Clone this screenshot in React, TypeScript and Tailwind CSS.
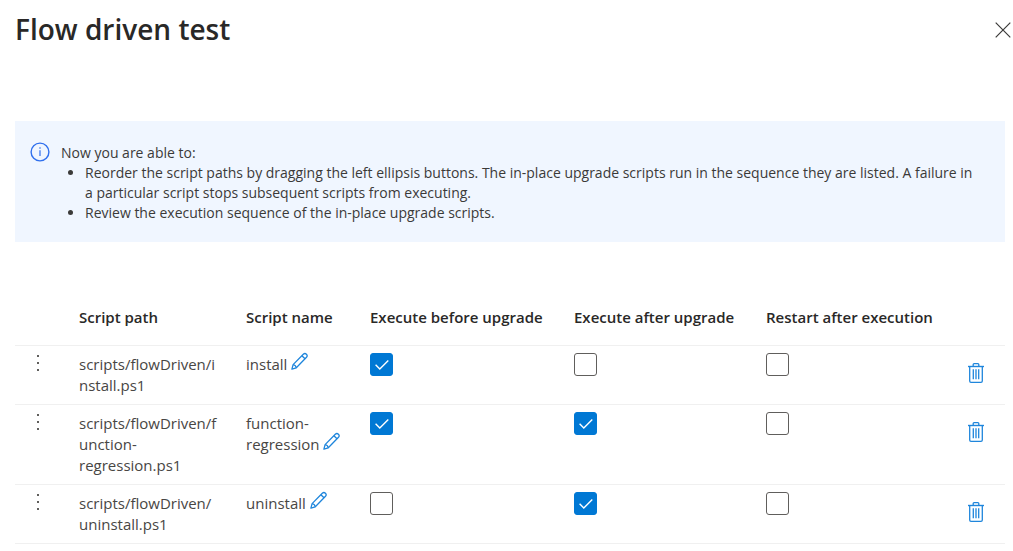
import { useState } from "react";

type Flag = "before" | "after" | "restart";

interface Script {
  path: string;
  name: string;
  before: boolean;
  after: boolean;
  restart: boolean;
}

const initialScripts: Script[] = [
  { path: "scripts/flowDriven/install.ps1", name: "install", before: true, after: false, restart: false },
  { path: "scripts/flowDriven/function-regression.ps1", name: "function-regression", before: true, after: true, restart: false },
  { path: "scripts/flowDriven/uninstall.ps1", name: "uninstall", before: false, after: true, restart: false },
];

const flags: { key: Flag; label: string }[] = [
  { key: "before", label: "Execute before upgrade" },
  { key: "after", label: "Execute after upgrade" },
  { key: "restart", label: "Restart after execution" },
];

function CloseIcon() {
  return (
    <svg width="16" height="16" viewBox="0 0 16 16" fill="none" stroke="#3b3a39" strokeWidth="1.2" aria-hidden="true">
      <path d="M0.7 0.7 15.3 15.3M15.3 0.7 0.7 15.3" />
    </svg>
  );
}

function InfoIcon() {
  return (
    <svg width="20" height="20" viewBox="0 0 20 20" fill="none" stroke="#2f6fed" aria-hidden="true">
      <circle cx="10" cy="10" r="8.9" strokeWidth="1.4" />
      <path d="M10 8.3V14" strokeWidth="1.2" />
      <circle cx="10" cy="6" r="0.8" fill="#2f6fed" stroke="none" />
    </svg>
  );
}

function PencilIcon() {
  return (
    <svg width="17" height="18" viewBox="0 0 17 18" fill="none" stroke="#1f86dc" strokeWidth="1.3" strokeLinejoin="round" aria-hidden="true">
      <path d="M0.9 17.2 2.1 12.6 12.3 2.2Q13.9 0.8 15.4 2.2 16.9 3.7 15.5 5.3L5.3 15.8Z" />
      <path d="M10.9 3.7 14 6.8M2.1 12.6Q4.8 13 5.3 15.8" />
    </svg>
  );
}

function TrashIcon() {
  return (
    <svg width="16" height="20" viewBox="0 0 16 20" fill="none" stroke="#1f86dc" strokeWidth="1.3" strokeLinejoin="round" aria-hidden="true">
      <path d="M0 3.5H16" strokeWidth="1.4" />
      <path d="M5.2 3.3V1.6Q5.2 0.7 6.1 0.7H9.9Q10.8 0.7 10.8 1.6V3.3" />
      <path d="M1.7 3.8V18Q1.7 19.3 3 19.3H13Q14.3 19.3 14.3 18V3.8" />
      <path d="M5.3 6.3V16.3M8 6.3V16.3M10.7 6.3V16.3" />
    </svg>
  );
}

function Checkbox({ label, checked, onChange }: { label: string; checked: boolean; onChange: () => void }) {
  return (
    <label className="grid size-[23px] cursor-pointer place-items-center">
      <input
        type="checkbox"
        aria-label={label}
        checked={checked}
        onChange={onChange}
        className="peer col-start-1 row-start-1 size-[23px] cursor-pointer appearance-none rounded-[3px] border border-[#605e5c] bg-white checked:border-[#0078d4] checked:bg-[#0078d4]"
      />
      <svg
        width="14"
        height="10"
        viewBox="0 0 14 10"
        fill="none"
        stroke="white"
        strokeWidth="1.4"
        className="pointer-events-none col-start-1 row-start-1 hidden peer-checked:block"
        aria-hidden="true"
      >
        <path d="M0.6 4.8 4.8 9 13.3 0.6" />
      </svg>
    </label>
  );
}

export default function App() {
  const [scripts, setScripts] = useState(initialScripts);

  const toggle = (index: number, key: Flag) =>
    setScripts((rows) => rows.map((row, i) => (i === index ? { ...row, [key]: !row[key] } : row)));

  const remove = (index: number) => setScripts((rows) => rows.filter((_, i) => i !== index));

  return (
    <main className="bg-white pb-1 font-['Open_Sans','Noto_Sans',sans-serif] text-[#3b3a39]">
      <header className="flex items-start justify-between pt-2 pr-0.5 pl-[15px]">
        <h1 className="text-[28px] leading-[42px] font-semibold text-[#292827]">Flow driven test</h1>
        <button type="button" aria-label="Close" className="mt-3.5 cursor-pointer">
          <CloseIcon />
        </button>
      </header>

      <div className="pr-2 pl-[15px]">
        <section className="mt-[71px] flex gap-[11px] bg-[#f0f6ff] pt-[21px] pr-6 pb-[19px] pl-[15px] text-[14px] leading-5">
          <div className="shrink-0">
            <InfoIcon />
          </div>
          <div className="pt-px">
            <p>Now you are able to:</p>
            <ul className="list-disc pl-6">
              <li>
                Reorder the script paths by dragging the left ellipsis buttons. The in-place upgrade scripts run in the
                sequence they are listed. A failure in a particular script stops subsequent scripts from executing.
              </li>
              <li>Review the execution sequence of the in-place upgrade scripts.</li>
            </ul>
          </div>
        </section>

        <table className="mt-[49px] w-full table-fixed text-left text-[15px] leading-[21px]">
          <colgroup>
            <col className="w-16" />
            <col className="w-[167px]" />
            <col className="w-[124px]" />
            <col className="w-[204px]" />
            <col className="w-48" />
            <col />
            <col className="w-[37px]" />
          </colgroup>
          <thead>
            <tr className="border-b border-[#f0f0f0] whitespace-nowrap text-[#292827]">
              <th aria-label="Reorder" />
              <th className="pt-4 pb-[17px] font-semibold">Script path</th>
              <th className="pt-4 pb-[17px] font-semibold">Script name</th>
              {flags.map((flag) => (
                <th key={flag.key} className="pt-4 pb-[17px] font-semibold">
                  {flag.label}
                </th>
              ))}
              <th aria-label="Delete" />
            </tr>
          </thead>
          <tbody>
            {scripts.map((script, index) => (
              <tr key={script.path} className="border-b border-[#f0f0f0] align-top text-[#484644]">
                <td className="pt-[9px] pl-[22px]">
                  <button type="button" aria-label={`Reorder ${script.name}`} className="flex cursor-grab flex-col gap-[5px]">
                    <span className="size-0.5 bg-[#605e5c]" />
                    <span className="size-0.5 bg-[#605e5c]" />
                    <span className="size-0.5 bg-[#605e5c]" />
                  </button>
                </td>
                <td className="py-2 pr-7 wrap-break-word">{script.path}</td>
                <td className="py-2 pr-5">
                  {script.name}{" "}
                  <button type="button" aria-label={`Rename ${script.name}`} className="-mt-1 cursor-pointer">
                    <PencilIcon />
                  </button>
                </td>
                {flags.map((flag) => (
                  <td key={flag.key} className="pt-[7px]">
                    <Checkbox
                      label={`${flag.label}: ${script.name}`}
                      checked={script[flag.key]}
                      onChange={() => toggle(index, flag.key)}
                    />
                  </td>
                ))}
                <td className="pt-[17px]">
                  <button type="button" aria-label={`Delete ${script.name}`} onClick={() => remove(index)} className="block cursor-pointer">
                    <TrashIcon />
                  </button>
                </td>
              </tr>
            ))}
          </tbody>
        </table>
      </div>
    </main>
  );
}
